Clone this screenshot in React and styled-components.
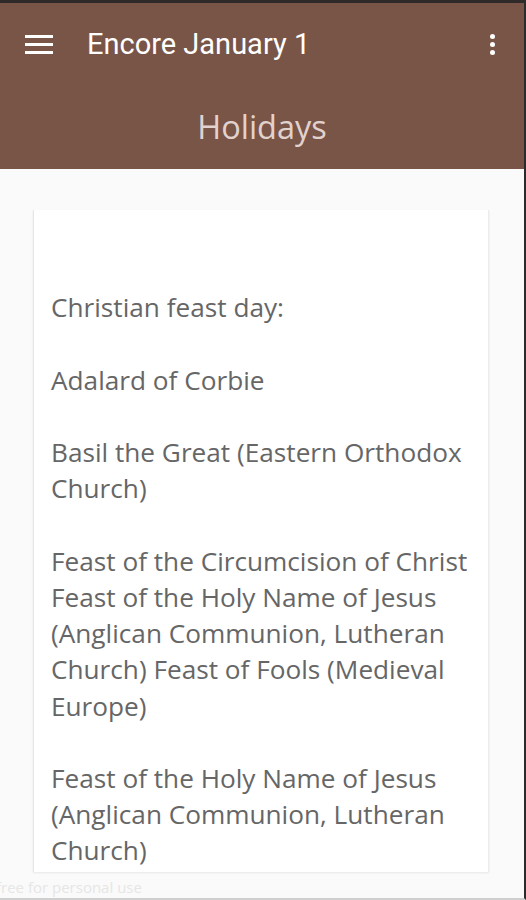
import React from "react";
import styled, { createGlobalStyle } from "styled-components";

const Global = createGlobalStyle`
  html, body {
    margin: 0;
    padding: 0;
    background: #fafafa;
  }
  * { box-sizing: border-box; }
`;

const Screen = styled.div`
  position: relative;
  width: 526px;
  height: 900px;
  overflow: hidden;
  display: flex;
  flex-direction: column;
  background: #fafafa;
  border-top: 3px solid #2e2a29;
  border-right: 2px solid #2b2b2b;
  border-bottom: 2px solid #cfcfcf;
`;

const Header = styled.header`
  background: #795548;
  height: 166px;
  flex-shrink: 0;
  display: flex;
  flex-direction: column;
`;

const Toolbar = styled.div`
  height: 82px;
  display: flex;
  align-items: center;
  padding: 0 0 0 25px;
`;

const MenuButton = styled.div`
  width: 28px;
  display: flex;
  flex-direction: column;
  gap: 5px;
  margin-right: 34px;

  span {
    display: block;
    height: 3px;
    background: #fff;
  }
`;

const AppTitle = styled.h1`
  flex: 1;
  margin: 0;
  font-family: Roboto, "Liberation Sans", sans-serif;
  font-weight: 400;
  font-size: 29px;
  color: #fff;
`;

const Overflow = styled.div`
  width: 36px;
  margin-right: 14px;
  display: flex;
  flex-direction: column;
  align-items: center;
  gap: 3px;

  span {
    width: 5px;
    height: 5px;
    border-radius: 50%;
    background: #fff;
  }
`;

const SectionTitle = styled.h2`
  margin: 0;
  text-align: center;
  font-family: "Open Sans", sans-serif;
  font-weight: 400;
  font-size: 32.5px;
  color: #e2d2ce;
  line-height: 1;
  padding-top: 26px;
`;

const Content = styled.main`
  flex: 1;
  min-height: 0;
  padding: 41px 35px 26px 33px;
  display: flex;
`;

const Card = styled.article`
  flex: 1;
  min-height: 0;
  background: #fff;
  border-left: 1px solid #e6e6e6;
  border-right: 1px solid #ececec;
  box-shadow: 0 1px 2px rgba(0, 0, 0, 0.08);
  padding: 7px 14px 0 17px;
  overflow: hidden;
`;

const Body = styled.p`
  margin: 0;
  font-family: "Open Sans", sans-serif;
  font-size: 26.2px;
  line-height: 36.2px;
  color: #666;
`;

const Watermark = styled.div`
  position: absolute;
  left: -4px;
  bottom: 1px;
  font-family: "Open Sans", sans-serif;
  font-size: 15px;
  color: #e6e6e6;
`;

const paragraphs = [
  "Christian feast day:",
  "Adalard of Corbie",
  "Basil the Great (Eastern Orthodox Church)",
  "Feast of the Circumcision of Christ Feast of the Holy Name of Jesus (Anglican Communion, Lutheran Church) Feast of Fools (Medieval Europe)",
  "Feast of the Holy Name of Jesus (Anglican Communion, Lutheran Church)",
  "Fulgentius of Ruspe",
];

export default function App() {
  return (
    <>
      <Global />
      <Screen>
        <Header>
          <Toolbar>
            <MenuButton>
              <span />
              <span />
              <span />
            </MenuButton>
            <AppTitle>Encore January 1</AppTitle>
            <Overflow>
              <span />
              <span />
              <span />
            </Overflow>
          </Toolbar>
          <SectionTitle>Holidays</SectionTitle>
        </Header>
        <Content>
          <Card>
            <Body>
              <br />
              <br />
              {paragraphs.map((p, i) => (
                <React.Fragment key={i}>
                  {p}
                  <br />
                  <br />
                </React.Fragment>
              ))}
            </Body>
          </Card>
        </Content>
        <Watermark>free for personal use</Watermark>
      </Screen>
    </>
  );
}
